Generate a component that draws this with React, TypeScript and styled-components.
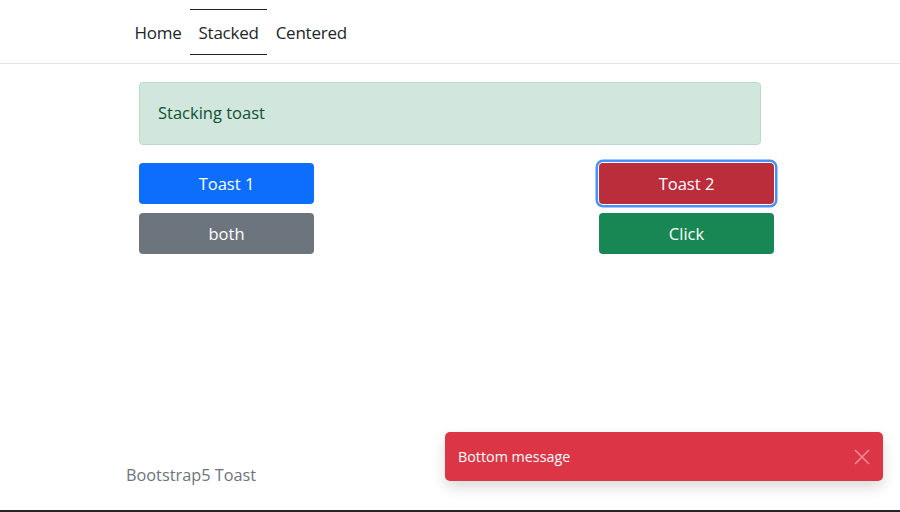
import React from "react";
import styled, { createGlobalStyle } from "styled-components";

const Global = createGlobalStyle`
  html, body { margin: 0; padding: 0; }
  body {
    font-family: "Open Sans", "Noto Sans", sans-serif;
    color: #212529;
    background: #fff;
    width: 900px;
    height: 512px;
    overflow: hidden;
  }
  * { box-sizing: border-box; }
`;

const Page = styled.div`
  width: 900px;
  height: 512px;
  display: flex;
  flex-direction: column;
  border-bottom: 2px solid #212529;
  position: relative;
`;

const NavBar = styled.nav`
  height: 64px;
  border-bottom: 1px solid #e3e3e3;
  display: flex;
  align-items: center;
  padding-left: 126px;
`;

const NavLink = styled.a<{ $active?: boolean }>`
  display: flex;
  align-items: center;
  height: 46px;
  padding: 0 8.5px;
  margin-top: 1px;
  font-size: 17px;
  letter-spacing: -0.25px;
  color: #212529;
  text-decoration: none;
  border-top: 1px solid ${(p) => (p.$active ? "#212529" : "transparent")};
  border-bottom: 1px solid ${(p) => (p.$active ? "#212529" : "transparent")};
`;

const Main = styled.main`
  flex: 1;
  padding: 18px 0 0 139px;
  width: 900px;
`;

const Alert = styled.div`
  width: 622px;
  height: 63px;
  background: #d1e7dd;
  border: 1px solid #badbcc;
  border-radius: 4px;
  color: #0f5132;
  font-size: 16.5px;
  display: flex;
  align-items: center;
  padding-left: 18px;
  padding-bottom: 2px;
`;

const ButtonGrid = styled.div`
  margin-top: 18px;
  width: 635px;
  display: grid;
  grid-template-columns: 175px 175px;
  justify-content: space-between;
  row-gap: 9px;
`;

const Btn = styled.button<{ $bg: string; $focus?: boolean }>`
  height: 41px;
  border: none;
  border-radius: 4px;
  background: ${(p) => p.$bg};
  color: #fff;
  font-family: "Open Sans", "Noto Sans", sans-serif;
  font-size: 16.5px;
  padding: 0 0 1px;
  box-shadow: ${(p) => (p.$focus ? "0 0 0 1px #fff, 0 0 0 3.5px #4592fd" : "none")};
`;

const Footer = styled.div`
  position: absolute;
  left: 126px;
  top: 464px;
  font-size: 16.3px;
  color: #6c757d;
`;

const Toast = styled.div`
  position: absolute;
  left: 445px;
  top: 432px;
  width: 438px;
  height: 49px;
  background: #dc3545;
  border-radius: 5px;
  box-shadow: 0 6px 14px rgba(0, 0, 0, 0.15);
  display: flex;
  align-items: center;
  justify-content: space-between;
  padding: 0 12px 0 13px;
  color: #fff;
  font-size: 14.3px;
`;

const Close = styled.span`
  width: 18px;
  height: 18px;
  display: flex;
  align-items: center;
  justify-content: center;
`;

export default function App() {
  return (
    <Page>
      <Global />
      <NavBar>
        <NavLink>Home</NavLink>
        <NavLink $active>Stacked</NavLink>
        <NavLink>Centered</NavLink>
      </NavBar>
      <Main>
        <Alert>Stacking toast</Alert>
        <ButtonGrid>
          <Btn $bg="#0d6efd">Toast 1</Btn>
          <Btn $bg="#bb2d3b" $focus>Toast 2</Btn>
          <Btn $bg="#6c757d">both</Btn>
          <Btn $bg="#198754">Click</Btn>
        </ButtonGrid>
      </Main>
      <Footer>Bootstrap5 Toast</Footer>
      <Toast>
        <span>Bottom message</span>
        <Close>
          <svg width="16" height="16" viewBox="0 0 16 16">
            <path d="M1 1L15 15M15 1L1 15" stroke="#f08a95" strokeWidth="1.6" />
          </svg>
        </Close>
      </Toast>
    </Page>
  );
}
